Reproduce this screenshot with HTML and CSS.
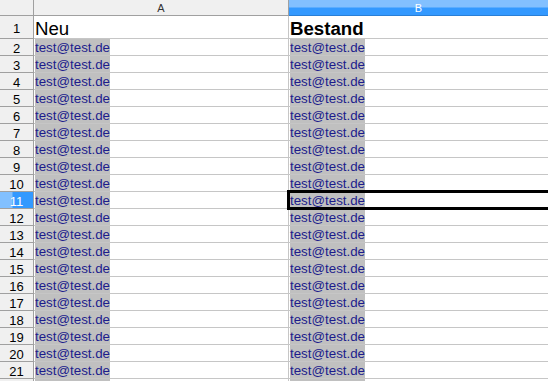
FILE: index.html
```html
<!DOCTYPE html>
<html>

<head>
  <title>Tabelle</title>
  <link rel="stylesheet" href="styles.css">
</head>

<body>
  <div class="sheet" id="sheet">
    <div class="corner"></div>
    <div class="colhead">A</div>
    <div class="colhead active">B</div>

    <div class="rowhead">1</div>
    <div class="cell title">Neu</div>
    <div class="cell title bold">Bestand</div>
  </div>
  <script>
    var sheet = document.getElementById('sheet');
    for (let i = 2; i <= 22; i++) {
      var head = document.createElement('div');
      head.className = 'rowhead' + (i == 11 ? ' active' : '');
      if (i < 22) head.textContent = i;
      sheet.appendChild(head);
      for (let c = 0; c < 2; c++) {
        var cell = document.createElement('div');
        cell.className = 'cell' + (i == 11 && c == 1 ? ' current' : '');
        var txt = document.createElement('span');
        txt.className = 'mail' + (i == 22 ? ' cut' : '');
        if (i < 22) txt.textContent = 'test@test.de';
        cell.appendChild(txt);
        sheet.appendChild(cell);
      }
    }
  </script>
</body>

</html>
```

FILE: styles.css
```css
body {
  margin: 0;
  padding: 0;
  background-color: #fff;
  overflow: hidden;
  font-family: "Liberation Sans", Arial, sans-serif;
}

.sheet {
  display: grid;
  grid-template-columns: 34px 255px 260px;
  grid-template-rows: 16px 23px repeat(21, 17px);
}

.corner,
.colhead,
.rowhead {
  background-color: #f0f0f0;
  border-right: 1px solid #a0a0a0;
  border-bottom: 1px solid #a0a0a0;
  box-sizing: border-box;
}

.colhead {
  font-size: 11px;
  color: #333;
  text-align: center;
  line-height: 16px;
}

.colhead.active {
  background: linear-gradient(to bottom, #82c0ff 0, #82c0ff 7px, #3399ff 8px);
  color: #fff;
  border-bottom-color: #2a7fd6;
}

.rowhead {
  display: flex;
  align-items: center;
  justify-content: center;
  padding-top: 2px;
  font-size: 13px;
  color: #000;
}

.rowhead.active {
  background: linear-gradient(to right, #82c0ff 0, #82c0ff 12px, #3399ff 13px);
  color: #fff;
}

.cell {
  border-right: 1px solid #c6c6c6;
  border-bottom: 1px solid #c6c6c6;
  box-sizing: border-box;
  padding-left: 1px;
  font-size: 13.33px;
  white-space: nowrap;
}

.title {
  font-size: 18.67px;
  color: #000;
  line-height: 25px;
}

.bold {
  font-weight: bold;
}

.mail {
  display: inline-block;
  height: 16px;
  line-height: 18px;
  background-color: #c0c0c0;
  color: #1c1c8c;
}

.mail.cut {
  width: 75px;
}

.current {
  position: relative;
}

.current::after {
  content: "";
  position: absolute;
  left: -2px;
  top: -2px;
  right: -4px;
  bottom: -2px;
  border: 3px solid #000;
}
```
